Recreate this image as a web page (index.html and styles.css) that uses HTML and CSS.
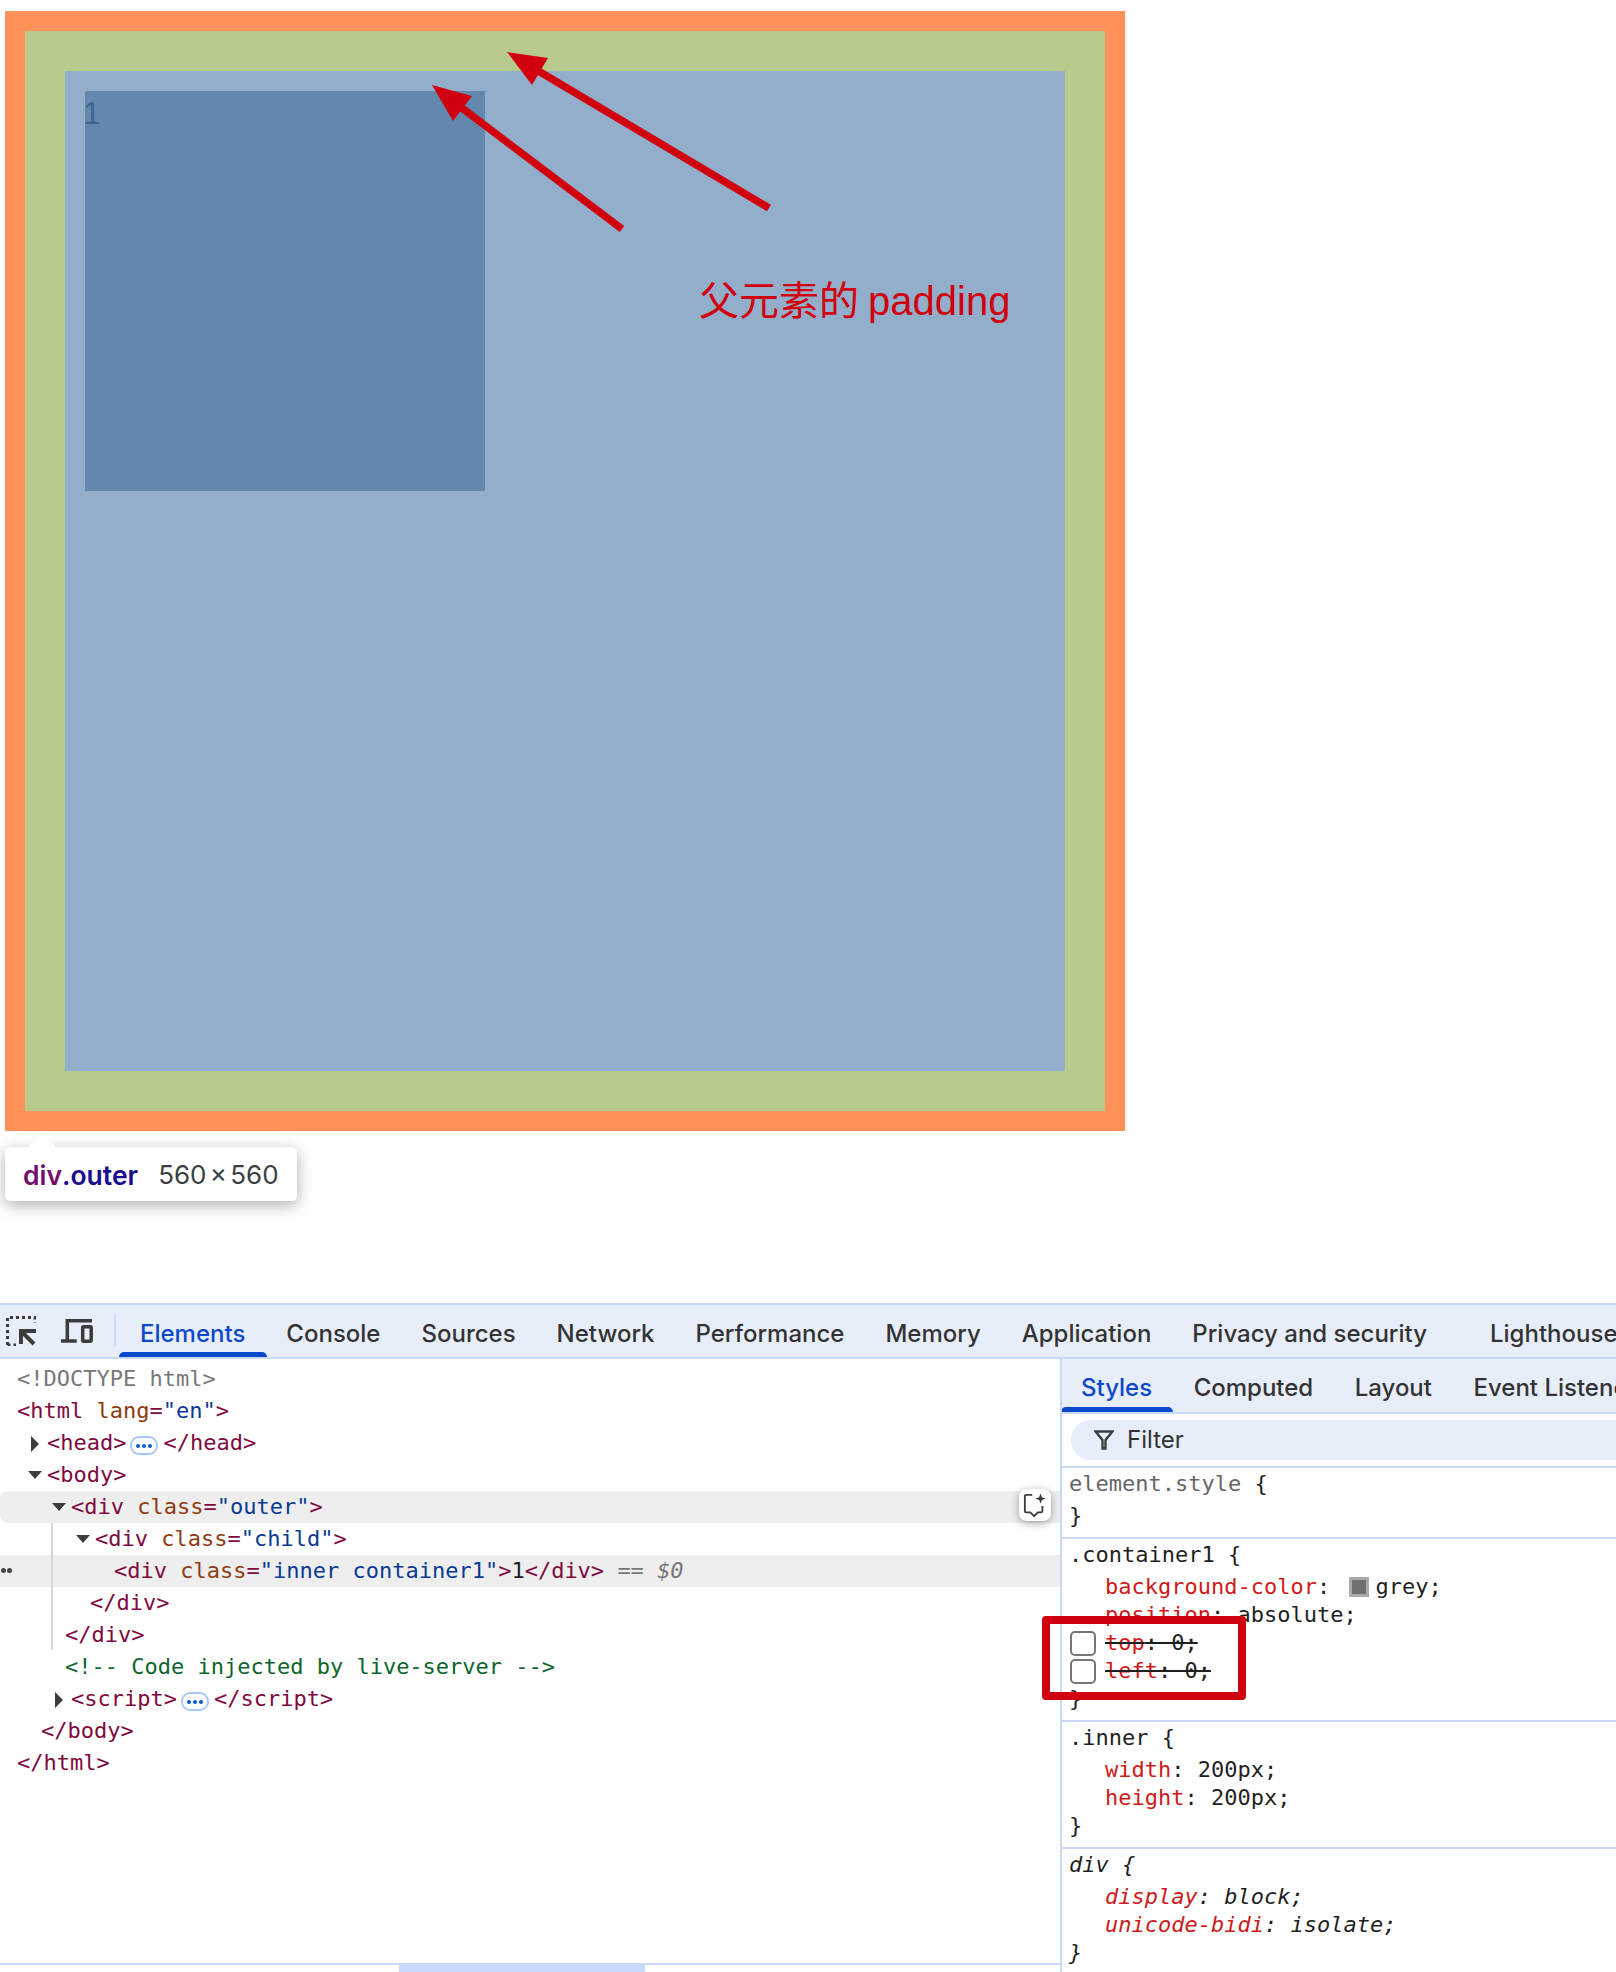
FILE: index.html
```html
<!DOCTYPE html>
<html lang="zh">
<head>
<meta charset="utf-8">
<title>DevTools padding</title>
<link rel="stylesheet" href="styles.css">
</head>
<body>
<section class="stage">
  <div class="outer">
    <div class="child">
      <div class="parent">
        <div class="inner">1</div>
      </div>
    </div>
  </div>
  <svg class="arrows" width="1616" height="320" viewBox="0 0 1616 320">
    <path class="shaft" d="M769 208 L525 63"/>
    <polygon class="head" points="507,52 548,58 532,85"/>
    <path class="shaft" d="M622 229 L450 99"/>
    <polygon class="head" points="432,85 472,96 453,121"/>
  </svg>
  <div class="note">父元素的 padding</div>
  <div class="tip">
    <span class="tip-tag">div</span><span class="tip-class">.outer</span>
    <span class="tip-size">560 × 560</span>
  </div>
</section>

<section class="devtools">
  <nav class="mainbar">
    <svg class="ico-inspect" width="30" height="30" viewBox="0 0 30 30">
      <path d="M1.5 29V1.5H29V7" class="dash"/>
      <path d="M1.5 29H10" class="dash"/>
      <path d="M15 28V15H28V13M15 15L28 28" class="arrowline"/>
      <path d="M13 13H29V17H13z" class="fill"/>
    </svg>
    <svg class="ico-device" width="34" height="26" viewBox="0 0 34 26">
      <path d="M6.3 22V2.7H31" class="line"/>
      <path d="M0 23H15.7" class="line"/>
      <rect x="21.7" y="8.7" width="8.5" height="14.6" rx="1" class="line"/>
    </svg>
    <span class="sep"></span>
    <a class="tab active t-el">Elements</a>
    <a class="tab">Console</a>
    <a class="tab">Sources</a>
    <a class="tab">Network</a>
    <a class="tab">Performance</a>
    <a class="tab">Memory</a>
    <a class="tab">Application</a>
    <a class="tab t-priv">Privacy and security</a>
    <a class="tab">Lighthouse</a>
  </nav>
  <div class="panes">
    <div class="treewrap">
      <div class="tree">
        <div class="row i0"><span class="doctype">&lt;!DOCTYPE html&gt;</span></div>
        <div class="row i0"><span class="t">&lt;html</span> <span class="a">lang</span><span class="t">=</span><span class="v">"en"</span><span class="t">&gt;</span></div>
        <div class="row i1"><i class="tri right"></i><span class="t">&lt;head&gt;</span><span class="pill"><b></b><b></b><b></b></span><span class="t">&lt;/head&gt;</span></div>
        <div class="row i1"><i class="tri down"></i><span class="t">&lt;body&gt;</span></div>
        <div class="row i2 hover"><i class="tri down"></i><span class="t">&lt;div</span> <span class="a">class</span><span class="t">=</span><span class="v">"outer"</span><span class="t">&gt;</span><button class="ai" type="button" aria-label="AI"><svg width="26" height="26" viewBox="0 0 26 26"><path d="M10 2H3.5A1.5 1.5 0 0 0 2 3.5V19.5A1.5 1.5 0 0 0 3.5 21H8L12 25L16 21H19.5A1.5 1.5 0 0 0 21 19.5V14" class="bubble"/><path d="M19 .5L20.5 4.5 24.5 6 20.5 7.5 19 11.5 17.5 7.5 13.5 6 17.5 4.5Z" class="spark"/></svg></button></div>
        <div class="row i3"><i class="tri down"></i><span class="t">&lt;div</span> <span class="a">class</span><span class="t">=</span><span class="v">"child"</span><span class="t">&gt;</span></div>
        <div class="row i4 selected"><span class="dots"><b></b><b></b></span><span class="t">&lt;div</span> <span class="a">class</span><span class="t">=</span><span class="v">"inner container1"</span><span class="t">&gt;</span><span class="txt">1</span><span class="t">&lt;/div&gt;</span> <span class="eq">== <em>$0</em></span></div>
        <div class="row c3"><span class="t">&lt;/div&gt;</span></div>
        <div class="row c2"><span class="t">&lt;/div&gt;</span></div>
        <div class="row c2"><span class="cm">&lt;!-- Code injected by live-server --&gt;</span></div>
        <div class="row i2"><i class="tri right"></i><span class="t">&lt;script&gt;</span><span class="pill"><b></b><b></b><b></b></span><span class="t">&lt;/script&gt;</span></div>
        <div class="row c1"><span class="t">&lt;/body&gt;</span></div>
        <div class="row i0"><span class="t">&lt;/html&gt;</span></div>
        <span class="guide"></span>
      </div>
      <div class="hscroll"><span class="thumb"></span></div>
    </div>
    <aside class="side">
      <nav class="subbar">
        <a class="stab active">Styles</a>
        <a class="stab">Computed</a>
        <a class="stab">Layout</a>
        <a class="stab">Event Listeners</a>
      </nav>
      <div class="filterrow">
        <div class="filter">
          <svg width="20" height="20" viewBox="0 0 20 20"><path d="M1.5 1.5H18.5L11.5 10V18.5H8.5V10Z" class="filt"/></svg>
          <span>Filter</span>
        </div>
      </div>
      <div class="rule">
        <div class="sel"><span class="muted">element.style</span> {</div>
        <div class="decl0">}</div>
      </div>
      <div class="rule">
        <div class="sel">.container1 {</div>
        <div class="decl"><span class="p">background-color</span>: <span class="swatch"></span>grey;</div>
        <div class="decl"><span class="p">position</span>: absolute;</div>
        <div class="decl off"><span class="box"></span><span class="p">top</span>: 0;</div>
        <div class="decl off"><span class="box"></span><span class="p">left</span>: 0;</div>
        <div class="decl0">}</div>
      </div>
      <div class="rule">
        <div class="sel">.inner {</div>
        <div class="decl"><span class="p">width</span>: 200px;</div>
        <div class="decl"><span class="p">height</span>: 200px;</div>
        <div class="decl0">}</div>
      </div>
      <div class="rule ua">
        <div class="sel">div {</div>
        <div class="decl"><span class="p">display</span>: block;</div>
        <div class="decl"><span class="p">unicode-bidi</span>: isolate;</div>
        <div class="decl0">}</div>
      </div>
      <span class="redbox"></span>
    </aside>
  </div>
</section>
</body>
</html>
```

FILE: styles.css
```css
html, body { margin: 0; padding: 0; background: #fff; }
body { width: 1616px; height: 1972px; overflow: hidden; font-family: "Inter", "Liberation Sans", sans-serif; }

.stage { position: relative; height: 1303px; padding: 11px 0 0 5px; box-sizing: border-box; }
.outer { width: 1120px; height: 1120px; box-sizing: border-box; padding: 20px; background: #ff9159; }
.child { height: 100%; box-sizing: border-box; padding: 40px; background: #b8ca8b; }
.parent { height: 100%; box-sizing: border-box; padding: 20px; background: #93aeca; }
.inner { width: 400px; height: 400px; background: #6487ae; color: #3d6893; font: 32px/45px "Liberation Sans", sans-serif; text-indent: -2px; }

.arrows { position: absolute; left: 0; top: 0; pointer-events: none; }
.shaft { fill: none; stroke: #d0000f; stroke-width: 7.5; }
.head { fill: #d0000f; }
.note { position: absolute; left: 699px; top: 275px; color: #d0000f; font: 40px/52px "Liberation Sans", "Noto Sans CJK SC", sans-serif; white-space: nowrap; word-spacing: -2px; }

.tip { position: absolute; left: 5px; top: 1147px; width: 292px; height: 54px; box-sizing: border-box; padding: 2px 0 0 18px; display: flex; align-items: center; background: #fff; border-radius: 5px; box-shadow: 0 4px 16px rgba(0,0,0,.32); font-size: 26.5px; line-height: 32px; white-space: nowrap; }
.tip::before { content: ""; position: absolute; left: 27px; top: -10px; width: 20px; height: 20px; background: #fff; transform: rotate(45deg); border-radius: 2px; }
.tip span { position: relative; }
.tip-tag { color: #730c70; font-weight: 600; }
.tip-class { color: #1a0a90; font-weight: 600; }
.tip-size { color: #3a3f44; margin-left: 20px; font-size: 26px; word-spacing: -4px; }

.devtools { height: 669px; display: flex; flex-direction: column; border-top: 2px solid #c8d9fb; box-sizing: border-box; }
.mainbar { height: 54px; flex: none; display: flex; align-items: center; background: #e8edfa; border-bottom: 2px solid #c8d9fb; position: relative; box-sizing: border-box; white-space: nowrap; overflow: hidden; }
.ico-inspect { margin-left: 6px; flex: none; }
.ico-device { margin-left: 25px; flex: none; }
.dash { fill: none; stroke: #3c3c3c; stroke-width: 3; stroke-dasharray: 3 3; }
.arrowline { fill: none; stroke: #3c3c3c; stroke-width: 4; }
.fill { fill: #3c3c3c; }
.line { fill: none; stroke: #3c3c3c; stroke-width: 3.5; }
.sep { width: 2px; height: 32px; background: #c8d9fb; margin: 0 24px 0 19px; flex: none; }
.tab { display: block; height: 52px; color: #333; font-size: 24px; font-weight: 500; line-height: 58px; margin-right: 41px; flex: none; position: relative; }
.tab.active { color: #0b48cc; }
.t-priv { margin-right: 63px; }
.t-el::after { content: ""; position: absolute; left: -21px; right: -22px; bottom: 0; height: 5px; background: #0b48cc; border-radius: 5px 5px 0 0; }

.panes { flex: 1; display: flex; min-height: 0; }
.treewrap { width: 1060px; flex: none; display: flex; flex-direction: column; }
.tree { flex: 1; padding-top: 4px; position: relative; font: 22px/32px "DejaVu Sans Mono", monospace; }
.row { height: 32px; white-space: pre; position: relative; }
.i0 { padding-left: 17px; }
.i1 { padding-left: 47px; }
.i2 { padding-left: 71px; }
.i3 { padding-left: 95px; }
.i4 { padding-left: 114px; }
.c1 { padding-left: 41px; }
.c2 { padding-left: 65px; }
.c3 { padding-left: 90px; }
.hover { background: #eee; border-radius: 8px 0 0 8px; }
.selected { background: #eee; }
.t { color: #7f0a3f; }
.a { color: #8f3a10; }
.v { color: #0a3a92; }
.doctype { color: #777; }
.cm { color: #0d652d; }
.txt { color: #202124; }
.eq { color: #777; }
.eq em { font-style: italic; }
.tri { position: absolute; width: 0; height: 0; }
.tri.down { top: 12px; margin-left: -19px; border-left: 7px solid transparent; border-right: 7px solid transparent; border-top: 8px solid #3c3c3c; }
.tri.right { top: 9px; margin-left: -16px; border-top: 8px solid transparent; border-bottom: 8px solid transparent; border-left: 8px solid #3c3c3c; }
.pill { width: 28px; height: 19px; margin: 9px 5px 0 4px; vertical-align: top; box-sizing: border-box; border: 2px solid #a8c7fa; border-radius: 9px; display: inline-flex; align-items: center; justify-content: center; gap: 2px; }
.pill b { width: 4px; height: 4px; border-radius: 50%; background: #0b57d0; }
.dots { position: absolute; left: 1px; top: 13px; display: flex; gap: 1px; }
.dots b { width: 5px; height: 5px; border-radius: 50%; background: #444; }
.guide { position: absolute; left: 51px; top: 164px; width: 2px; height: 127px; background: #d8d8d8; }
.ai { position: absolute; left: 1019px; top: -2px; width: 32px; height: 32px; padding: 3px 4px; border: 0; background: #fff; border-radius: 8px; box-shadow: 0 2px 8px rgba(0,0,0,.35); display: flex; }
.bubble { fill: none; stroke: #3c3c3c; stroke-width: 2; }
.spark { fill: #3c3c3c; }
.hscroll { height: 9px; flex: none; border-top: 2px solid #c8d9fb; box-sizing: border-box; padding-left: 399px; }
.thumb { display: block; width: 246px; height: 7px; background: #c8d9fb; }

.side { flex: 1; min-width: 0; border-left: 2px solid #c8d9fb; position: relative; font: 22px/28px "DejaVu Sans Mono", monospace; color: #1f1f1f; }
.subbar { height: 55px; background: #e8edfa; border-bottom: 2px solid #c8d9fb; box-sizing: border-box; display: flex; align-items: flex-start; white-space: nowrap; padding-left: 19px; overflow: hidden; }
.stab { display: block; height: 53px; color: #333; font: 500 24px/58px "Inter", sans-serif; margin-right: 41.5px; position: relative; flex: none; }
.stab.active { color: #0b48cc; }
.stab.active::after { content: ""; position: absolute; left: -20px; right: -21px; bottom: 0; height: 5px; background: #0b48cc; border-radius: 5px 5px 0 0; }
.filterrow { height: 52px; padding: 6px 0 0 9px; box-sizing: border-box; }
.filter { height: 40px; border-radius: 20px 0 0 20px; background: #e8edfa; display: flex; align-items: center; gap: 13px; padding-left: 23px; font: 400 24px/40px "Inter", sans-serif; color: #333; }
.filt { fill: none; stroke: #3c3c3c; stroke-width: 2.4; }
.rule { border-top: 2px solid #c8d9fb; padding: 0 0 7px 7px; }
.sel { height: 32px; line-height: 32px; margin-bottom: 2px; white-space: pre; }
.decl0 { height: 28px; }
.decl { height: 28px; padding-left: 36px; white-space: pre; position: relative; }
.p { color: #cf1a1a; }
.muted { color: #666; }
.swatch { display: inline-block; width: 20px; height: 20px; box-sizing: border-box; border: 3px solid #aaa; background: #6f6f6f; margin: 0 6px 0 6px; vertical-align: -3px; }
.off { text-decoration: line-through; text-decoration-color: #1f1f1f; }
.box { position: absolute; left: 1px; top: 2px; width: 26px; height: 25px; box-sizing: border-box; border: 2px solid #777; border-radius: 5px; background: #fff; }
.ua { font-style: italic; }
.redbox { position: absolute; left: -20px; top: 257px; width: 204px; height: 84px; box-sizing: border-box; border: 8px solid #d0000f; border-radius: 4px; }
```
